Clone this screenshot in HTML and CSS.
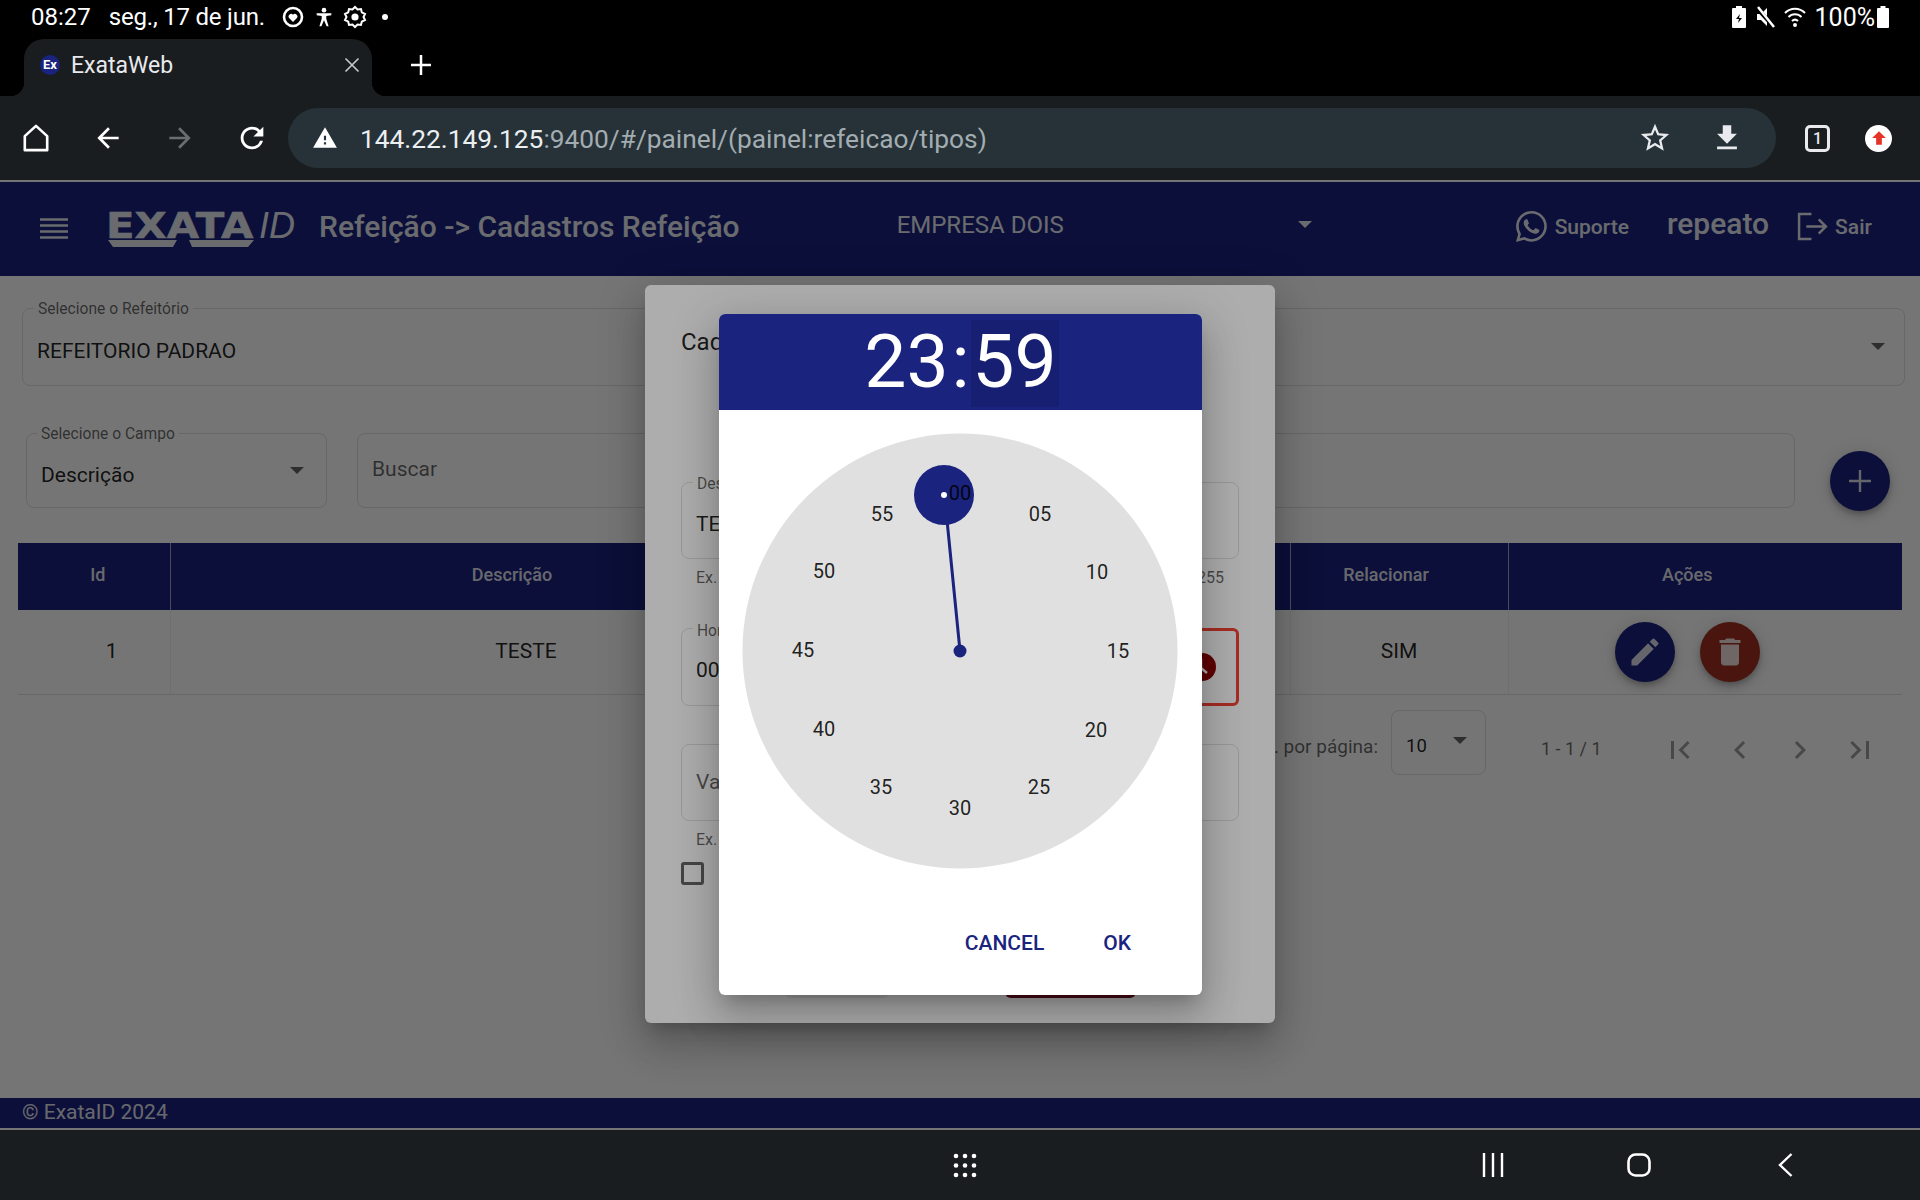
FILE: index.html
```html
<!DOCTYPE html>
<html lang="pt-BR">
<head>
    <meta charset="UTF-8">
    <title>ExataWeb</title>
    <link rel="stylesheet" href="styles.css">
</head>
<body>
    <div class="status-bar">
        <span class="status-time">08:27</span>
        <span class="status-date">seg., 17 de jun.</span>
        <svg class="status-icon" viewBox="0 0 24 24" width="24" height="24"><circle cx="12" cy="12" r="9" fill="none" stroke="#fff" stroke-width="2.6"/><path d="M12 17l-4.2-4.2a2.6 2.6 0 0 1 4.2-3 2.6 2.6 0 0 1 4.2 3z" fill="#fff"/></svg>
        <svg class="status-icon" viewBox="0 0 24 24" width="22" height="24"><circle cx="12" cy="4.5" r="2.5" fill="#fff"/><path d="M4 8h16v2l-5.5 1v3l2.5 8h-2.2L12 15.5 9.2 22H7l2.5-8v-3L4 10z" fill="#fff"/></svg>
        <svg class="status-icon" viewBox="0 0 24 24" width="24" height="24"><path d="M12 2l2.5 2.5 3.5-.5.8 3.4 3.2 1.6-1.5 3 1.5 3-3.2 1.6-.8 3.4-3.5-.5L12 22l-2.5-2.5-3.5.5-.8-3.4L2 15l1.5-3L2 9l3.2-1.6L6 4l3.5.5z" fill="none" stroke="#fff" stroke-width="2"/><circle cx="12" cy="12" r="3.6" fill="#fff"/></svg>
        <span class="status-dot"></span>
        <span class="status-right">
            <svg viewBox="0 0 14 22" width="14" height="22"><path d="M4 0h6v2h3a1 1 0 0 1 1 1v18a1 1 0 0 1-1 1H1a1 1 0 0 1-1-1V3a1 1 0 0 1 1-1h3z" fill="#fff"/><path d="M8 8L4 13h3l-1 4 4-5H7z" fill="#000"/></svg>
            <svg viewBox="0 0 20 22" width="20" height="22"><path d="M2 8h4l6-6v18l-6-6H2z" fill="#fff"/><path d="M1 1l18 20" stroke="#000" stroke-width="4"/><path d="M3 1l16 20" stroke="#fff" stroke-width="2.5"/></svg>
            <svg viewBox="0 0 22 22" width="22" height="22" fill="none" stroke="#fff" stroke-width="2"><path d="M1 7a14 14 0 0 1 20 0"/><path d="M4.5 11a9 9 0 0 1 13 0"/><path d="M8 15a4.5 4.5 0 0 1 6 0"/><circle cx="11" cy="19" r="1" fill="#fff"/></svg>
            <span class="status-pct">100%</span>
            <svg viewBox="0 0 12 22" width="12" height="22"><path d="M3.5 0h5v2H11a1 1 0 0 1 1 1v18a1 1 0 0 1-1 1H1a1 1 0 0 1-1-1V3a1 1 0 0 1 1-1h2.5z" fill="#fff"/></svg>
        </span>
    </div>

    <div class="tab-strip">
        <div class="tab">
            <span class="favicon">Ex</span>
            <span class="tab-title">ExataWeb</span>
            <svg class="tab-close" viewBox="0 0 16 16" width="16" height="16"><path d="M1.5 1.5l13 13M14.5 1.5l-13 13" stroke="#c4c7c9" stroke-width="1.7"/></svg>
        </div>
        <svg class="new-tab" viewBox="0 0 22 22" width="22" height="22"><path d="M11 1v20M1 11h20" stroke="#fff" stroke-width="2.5"/></svg>
    </div>

    <div class="toolbar">
        <svg class="tool-btn" viewBox="0 0 28 30" width="26" height="28"><path d="M14 2L2 13v15h24V13z" fill="none" stroke="#fff" stroke-width="2.8" stroke-linejoin="round"/></svg>
        <svg class="tool-btn" viewBox="0 0 24 24" width="32" height="32"><path d="M20 11H7.83l5.59-5.59L12 4l-8 8 8 8 1.41-1.41L7.83 13H20v-2z" fill="#fff"/></svg>
        <svg class="tool-btn" viewBox="0 0 24 24" width="32" height="32"><path d="M12 4l-1.41 1.41L16.17 11H4v2h12.17l-5.58 5.59L12 20l8-8z" fill="#6b6e70"/></svg>
        <svg class="tool-btn" viewBox="0 0 24 24" width="34" height="34"><path d="M17.65 6.35A7.958 7.958 0 0 0 12 4c-4.42 0-7.99 3.58-7.99 8s3.57 8 7.99 8c3.73 0 6.84-2.55 7.73-6h-2.08A5.99 5.99 0 0 1 12 18c-3.31 0-6-2.69-6-6s2.69-6 6-6c1.66 0 3.14.69 4.22 1.78L13 11h7V4l-2.35 2.35z" fill="#fff"/></svg>
        <div class="omnibox">
            <svg class="omni-warning" viewBox="0 0 24 24" width="26" height="26"><path d="M1 21h22L12 2 1 21zm12-3h-2v-2h2v2zm0-4h-2v-4h2v4z" fill="#fff"/></svg>
            <span class="omni-url"><span class="omni-host">144.22.149.125</span>:9400/#/painel/(painel:refeicao/tipos)</span>
            <svg class="omni-star" viewBox="0 0 24 24" width="34" height="34"><path d="M22 9.24l-7.19-.62L12 2 9.19 8.63 2 9.24l5.46 4.73L5.82 21 12 17.27 18.18 21l-1.63-7.03L22 9.24zM12 15.4l-3.76 2.27 1-4.28-3.32-2.88 4.38-.38L12 6.1l1.71 4.04 4.38.38-3.32 2.88 1 4.28L12 15.4z" fill="#e8eaed"/></svg>
            <svg class="omni-download" viewBox="0 0 24 24" width="34" height="34"><path d="M19 9h-4V3H9v6H5l7 7 7-7zM5 18v2h14v-2H5z" fill="#e8eaed"/></svg>
        </div>
        <span class="tab-count">1</span>
        <span class="profile"><svg viewBox="0 0 14 14" width="16" height="16"><path d="M7 1L1 7h3.5v6h5V7H13z" fill="#e53327"/></svg></span>
    </div>

    <div class="app">
        <header class="app-header">
            <svg class="menu-icon" viewBox="0 0 28 21" width="28" height="21"><path d="M0 1.5h28M0 7.5h28M0 13.5h28M0 19.5h28" stroke="#fff" stroke-width="2.6"/></svg>
            <div class="logo">
                <div class="logo-text"><span class="logo-exata">EXATA</span><span class="logo-id">ID</span></div>
                <svg class="logo-swoosh" viewBox="0 0 148 7" width="148" height="7"><path d="M1 0h69l-4 7H6zM82 0h65l-6 7H85z" fill="#fff"/></svg>
            </div>
            <h1 class="page-title">Refeição -&gt; Cadastros Refeição</h1>
            <div class="company">
                <span>EMPRESA DOIS</span>
                <span class="caret"></span>
            </div>
            <a class="header-link support">
                <svg viewBox="0 0 16 16" width="31" height="31"><path d="M13.601 2.326A7.854 7.854 0 0 0 7.994 0C3.627 0 .068 3.558.064 7.926c0 1.399.366 2.76 1.057 3.965L0 16l4.204-1.102a7.933 7.933 0 0 0 3.79.965h.004c4.368 0 7.926-3.558 7.93-7.93A7.898 7.898 0 0 0 13.6 2.326zM7.994 14.521a6.573 6.573 0 0 1-3.356-.92l-.24-.144-2.494.654.666-2.433-.156-.251a6.56 6.56 0 0 1-1.007-3.505c0-3.626 2.957-6.584 6.591-6.584a6.56 6.56 0 0 1 4.66 1.931 6.557 6.557 0 0 1 1.928 4.66c-.004 3.639-2.961 6.592-6.592 6.592zm3.615-4.934c-.197-.099-1.17-.578-1.353-.646-.182-.065-.315-.099-.445.099-.133.197-.513.646-.627.775-.114.133-.232.148-.43.05-.197-.1-.836-.308-1.592-.985-.59-.525-.985-1.175-1.103-1.372-.114-.198-.011-.304.088-.403.087-.088.197-.232.296-.346.1-.114.133-.198.198-.33.065-.134.034-.248-.015-.347-.05-.099-.445-1.076-.612-1.47-.16-.389-.323-.335-.445-.34-.114-.007-.247-.007-.38-.007a.729.729 0 0 0-.529.247c-.182.198-.691.677-.691 1.654 0 .977.71 1.916.81 2.049.098.133 1.394 2.132 3.383 2.992.47.205.84.326 1.129.418.475.152.904.129 1.246.08.38-.058 1.171-.48 1.338-.943.164-.464.164-.86.114-.943-.049-.084-.182-.133-.38-.232z" fill="#fff"/></svg>
                <span>Suporte</span>
            </a>
            <span class="user-name">repeato</span>
            <a class="header-link logout">
                <svg viewBox="0 0 30 30" width="31" height="31" fill="none" stroke="#fff" stroke-width="2.4"><path d="M14 3H2v24h12"/><path d="M9 15h19M21 8l7 7-7 7"/></svg>
                <span>Sair</span>
            </a>
        </header>

        <main class="content">
            <div class="field field-canteen">
                <label class="field-label">Selecione o Refeitório</label>
                <span class="field-value">REFEITORIO PADRAO</span>
                <span class="caret caret-dark"></span>
            </div>

            <div class="search-row">
                <div class="field field-column">
                    <label class="field-label">Selecione o Campo</label>
                    <span class="field-value">Descrição</span>
                    <span class="caret caret-dark"></span>
                </div>
                <div class="field field-search">
                    <span class="field-value field-placeholder">Buscar</span>
                </div>
                <button class="fab fab-add">
                    <svg viewBox="0 0 24 24" width="24" height="24"><path d="M12 1v22M1 12h22" stroke="#fff" stroke-width="2.4"/></svg>
                </button>
            </div>

            <table class="data-table">
                <colgroup>
                    <col class="col-id"><col class="col-desc"><col class="col-hidden"><col class="col-rel"><col class="col-actions">
                </colgroup>
                <thead>
                    <tr>
                        <th class="th-id">Id</th>
                        <th class="th-desc">Descrição</th>
                        <th></th>
                        <th class="th-rel">Relacionar</th>
                        <th class="th-actions">Ações</th>
                    </tr>
                </thead>
                <tbody>
                    <tr>
                        <td class="td-id">1</td>
                        <td>TESTE</td>
                        <td></td>
                        <td>SIM</td>
                        <td class="td-actions">
                            <button class="fab">
                                <svg viewBox="0 0 24 24" width="36" height="36"><path d="M3 17.25V21h3.75L17.81 9.94l-3.75-3.75L3 17.25zM20.71 7.04a.996.996 0 0 0 0-1.41l-2.34-2.34a.996.996 0 0 0-1.41 0l-1.83 1.83 3.75 3.75 1.83-1.83z" fill="#fff"/></svg>
                            </button>
                            <button class="fab fab-danger">
                                <svg viewBox="0 0 24 24" width="36" height="36"><path d="M6 19c0 1.1.9 2 2 2h8c1.1 0 2-.9 2-2V7H6v12zM19 4h-3.5l-1-1h-5l-1 1H5v2h14V4z" fill="#fff"/></svg>
                            </button>
                        </td>
                    </tr>
                </tbody>
            </table>

            <div class="paginator">
                <span class="page-size-label">Qtd. por página:</span>
                <div class="field page-size">
                    <span class="field-value">10</span>
                    <span class="caret caret-dark"></span>
                </div>
                <span class="page-range">1 - 1 / 1</span>
                <svg class="page-btn" viewBox="0 0 24 24" width="36" height="36"><path d="M18.41 16.59L13.82 12l4.59-4.59L17 6l-6 6 6 6zM6 6h2v12H6z"/></svg>
                <svg class="page-btn" viewBox="0 0 24 24" width="36" height="36"><path d="M15.41 7.41L14 6l-6 6 6 6 1.41-1.41L10.83 12z"/></svg>
                <svg class="page-btn" viewBox="0 0 24 24" width="36" height="36"><path d="M10 6L8.59 7.41 13.17 12l-4.58 4.59L10 18l6-6z"/></svg>
                <svg class="page-btn" viewBox="0 0 24 24" width="36" height="36"><path d="M5.59 7.41L10.18 12l-4.59 4.59L7 18l6-6-6-6zM16 6h2v12h-2z"/></svg>
            </div>
        </main>

        <footer class="app-footer">© ExataID 2024</footer>

        <div class="backdrop"></div>

        <section class="dialog">
            <h2 class="dialog-title">Cadastro</h2>
            <div class="field dialog-field first-field">
                <label class="field-label">Descrição</label>
                <span class="field-value">TESTE</span>
            </div>
            <div class="hint-row"><span>Ex.</span><span>5 / 255</span></div>
            <div class="hour-row">
                <div class="field dialog-field hour-field">
                    <label class="field-label">Hora</label>
                    <span class="field-value">00:00</span>
                </div>
                <div class="clock-box">
                    <svg viewBox="0 0 28 28" width="28" height="28"><circle cx="14" cy="14" r="14" fill="#8d0000"/><path d="M13 6v9l6 5" fill="none" stroke="#fff" stroke-width="2.5"/></svg>
                </div>
            </div>
            <div class="field dialog-field value-field">
                <span class="field-value field-placeholder">Valor</span>
            </div>
            <div class="hint-row"><span>Ex.</span></div>
            <div class="check-row"><span class="checkbox"></span></div>
            <div class="dialog-actions">
                <button class="btn-plain"></button>
                <button class="btn-danger"></button>
            </div>
        </section>

        <div class="backdrop"></div>

        <section class="time-picker">
            <div class="picker-head">
                <span class="picker-unit">23</span><span class="picker-colon">:</span><span class="picker-unit picker-active">59</span>
            </div>
            <svg class="dial" viewBox="0 0 483 480" width="483" height="480">
                <circle cx="241" cy="241" r="217.5" fill="#e0e0e0"/>
                <line x1="241" y1="241" x2="227" y2="100" stroke="#1a237e" stroke-width="3"/>
                <circle cx="241" cy="241" r="6.5" fill="#1a237e"/>
                <circle cx="225" cy="85" r="30" fill="#1a237e"/>
                <circle cx="225" cy="85" r="3" fill="#fff"/>
                <g class="dial-nums">
                    <text x="241" y="90">00</text>
                    <text x="321" y="111">05</text>
                    <text x="378" y="169">10</text>
                    <text x="399" y="248">15</text>
                    <text x="377" y="327">20</text>
                    <text x="320" y="384">25</text>
                    <text x="241" y="405">30</text>
                    <text x="162" y="384">35</text>
                    <text x="105" y="326">40</text>
                    <text x="84" y="247">45</text>
                    <text x="105" y="168">50</text>
                    <text x="163" y="111">55</text>
                </g>
            </svg>
            <div class="picker-actions">
                <button class="picker-btn">CANCEL</button>
                <button class="picker-btn">OK</button>
            </div>
        </section>
    </div>

    <div class="nav-bar">
        <svg class="nav-apps" viewBox="0 0 24 25" width="24" height="25" fill="#fff"><circle cx="3" cy="3" r="2.3"/><circle cx="12" cy="3" r="2.3"/><circle cx="21" cy="3" r="2.3"/><circle cx="3" cy="12.5" r="2.3"/><circle cx="12" cy="12.5" r="2.3"/><circle cx="21" cy="12.5" r="2.3"/><circle cx="3" cy="22" r="2.3"/><circle cx="12" cy="22" r="2.3"/><circle cx="21" cy="22" r="2.3"/></svg>
        <svg class="nav-recent" viewBox="0 0 22 24" width="22" height="24"><path d="M2 0v24M11 0v24M20 0v24" stroke="#fff" stroke-width="2.4"/></svg>
        <svg class="nav-home" viewBox="0 0 24 24" width="24" height="24"><rect x="1.5" y="1.5" width="21" height="21" rx="7" fill="none" stroke="#fff" stroke-width="2.6"/></svg>
        <svg class="nav-back" viewBox="0 0 15 24" width="15" height="24"><path d="M13.5 1L2 12l11.5 11" fill="none" stroke="#fff" stroke-width="2.4"/></svg>
    </div>
</body>
</html>
```

FILE: styles.css
```css
* {
    margin: 0;
    padding: 0;
    box-sizing: border-box;
}

html, body {
    height: 1200px;
    overflow: hidden;
}

body {
    font-family: Roboto, "Liberation Sans", sans-serif;
    background: #000;
    color: #fff;
    display: flex;
    flex-direction: column;
}

button {
    font-family: inherit;
    border: none;
    background: none;
}

/* device status bar */
.status-bar {
    height: 39px;
    padding: 0 31px 5px;
    display: flex;
    align-items: center;
    font-size: 24px;
}

.status-date {
    margin-left: 18px;
    margin-right: 16px;
    letter-spacing: -0.2px;
}

.status-icon {
    margin-right: 8px;
    flex: none;
}

.status-dot {
    width: 6px;
    height: 6px;
    margin-left: 7px;
    background: #fff;
    border-radius: 50%;
}

.status-right {
    margin-left: auto;
    display: flex;
    align-items: center;
    gap: 9px;
}

.status-pct {
    font-size: 25px;
    margin-right: -7px;
}

/* browser tabs */
.tab-strip {
    height: 57px;
    flex: none;
    display: flex;
    align-items: center;
}

.tab {
    width: 348px;
    height: 57px;
    margin-left: 24px;
    padding: 0 12px 5px 16px;
    background: #1a1d1f;
    border-radius: 20px 20px 0 0;
    display: flex;
    align-items: center;
    position: relative;
}

.tab::before,
.tab::after {
    content: "";
    position: absolute;
    bottom: 0;
    width: 14px;
    height: 14px;
}

.tab::before {
    left: -14px;
    background: radial-gradient(circle at 0 0, transparent 14px, #1a1d1f 14.5px);
}

.tab::after {
    right: -14px;
    background: radial-gradient(circle at 100% 0, transparent 14px, #1a1d1f 14.5px);
}

.favicon {
    width: 20px;
    height: 20px;
    background: #1a237e;
    border-radius: 50%;
    font-size: 13px;
    font-weight: 700;
    line-height: 20px;
    text-align: center;
}

.tab-title {
    margin-left: 11px;
    font-size: 23px;
    color: #e8eaed;
}

.tab-close {
    margin-left: auto;
}

.new-tab {
    margin-left: 38px;
    margin-bottom: 5px;
}

/* browser toolbar */
.toolbar {
    height: 84px;
    flex: none;
    background: #1a1d1f;
    display: flex;
    align-items: center;
}

.tool-btn {
    flex: none;
    width: 72px;
}

.omnibox {
    width: 1488px;
    height: 60px;
    flex: none;
    padding: 0 32px 0 24px;
    background: #263238;
    border-radius: 30px;
    display: flex;
    align-items: center;
}

.omni-url {
    margin-left: 22px;
    margin-top: 2px;
    font-size: 26.3px;
    color: #a3adb1;
    white-space: nowrap;
}

.omni-host {
    color: #eceff1;
}

.omni-star {
    margin-left: auto;
}

.omni-download {
    margin-left: 38px;
}

.tab-count {
    width: 25px;
    height: 27px;
    flex: none;
    margin-left: 29px;
    border: 3px solid #e8eaed;
    border-radius: 5px;
    font-size: 16px;
    font-weight: 500;
    line-height: 21px;
    text-align: center;
    color: #e8eaed;
}

.profile {
    width: 27px;
    height: 27px;
    flex: none;
    margin-left: 35px;
    background: #fff;
    border-radius: 50%;
    display: flex;
    align-items: center;
    justify-content: center;
}

/* the web app */
.app {
    height: 950px;
    flex: none;
    background: #fff;
    display: flex;
    flex-direction: column;
    position: relative;
    overflow: hidden;
}

.app-header {
    height: 96px;
    flex: none;
    padding-bottom: 5px;
    background: #1a237e;
    border-top: 2px solid #fff;
    display: flex;
    align-items: center;
}

.app-header > * {
    opacity: 0.9;
}

.menu-icon {
    flex: none;
    margin-left: 40px;
    margin-top: 3px;
}

.logo {
    width: 190px;
    flex: none;
    margin-left: 39px;
    margin-top: 6px;
    display: flex;
    flex-direction: column;
}

.logo-text {
    display: flex;
    align-items: baseline;
    height: 28px;
    line-height: 28px;
}

.logo-exata {
    width: 151px;
    flex: none;
    margin-left: -1px;
    font-family: "DejaVu Sans", sans-serif;
    font-size: 36px;
    font-weight: 700;
    -webkit-text-stroke: 0.5px #fff;
    transform: scaleX(1.16);
    transform-origin: left;
}

.logo-id {
    font-family: "Liberation Sans", sans-serif;
    font-size: 36px;
    font-style: italic;
    margin-left: 2px;
}

.page-title {
    margin-left: 22px;
    font-size: 30px;
    font-weight: 500;
    white-space: nowrap;
}

.company {
    width: 415px;
    flex: none;
    margin-left: 157px;
    margin-top: -4px;
    font-size: 24px;
    display: flex;
    align-items: center;
    justify-content: space-between;
}

.caret {
    width: 0;
    height: 0;
    flex: none;
    border-left: 7px solid transparent;
    border-right: 7px solid transparent;
    border-top: 7px solid #fff;
}

.caret-dark {
    border-top-color: rgba(0, 0, 0, 0.6);
}

.header-link {
    display: flex;
    align-items: center;
    font-size: 21px;
    font-weight: 500;
}

.support {
    margin-left: 204px;
    gap: 8px;
}

.user-name {
    margin-left: 38px;
    margin-top: -6px;
    font-size: 30px;
    font-weight: 500;
}

.logout {
    margin-left: 28px;
    gap: 7px;
}

.content {
    flex: 1;
    padding: 32px 18px 0;
    color: rgba(0, 0, 0, 0.87);
}

/* outlined form fields */
.field {
    height: 77px;
    border: 1px solid rgba(0, 0, 0, 0.12);
    border-radius: 8px;
    padding: 0 14px;
    display: flex;
    align-items: center;
    justify-content: space-between;
    position: relative;
    color: rgba(0, 0, 0, 0.87);
}

.field-label {
    position: absolute;
    top: -9px;
    left: 11px;
    padding: 0 4px;
    background: #fff;
    font-size: 15.6px;
    line-height: 18px;
    color: rgba(0, 0, 0, 0.6);
}

.field-value {
    font-size: 21px;
}

.field-placeholder {
    color: rgba(0, 0, 0, 0.6);
}

.field-canteen {
    height: 78px;
    margin: 0 -3px 0 4px;
}

.field-canteen .field-value {
    margin-top: 8px;
}

.field-canteen .caret {
    margin-right: 5px;
    margin-top: -2px;
}

.search-row {
    margin-top: 47px;
    margin-left: 8px;
    display: flex;
    align-items: flex-start;
}

.field-column {
    width: 301px;
    height: 75px;
}

.field-column .field-label {
    left: 10px;
}

.field-column .field-value {
    margin-top: 8px;
}

.field-column .caret {
    margin-right: 8px;
}

.field-search {
    width: 1438px;
    height: 75px;
    margin-left: 30px;
}

.field-search .field-value {
    margin-top: -3px;
}

.fab {
    width: 60px;
    height: 60px;
    background: #1a237e;
    border-radius: 50%;
    display: inline-flex;
    align-items: center;
    justify-content: center;
    box-shadow: 0 3px 5px -1px rgba(0, 0, 0, 0.2), 0 6px 10px 0 rgba(0, 0, 0, 0.14), 0 1px 18px 0 rgba(0, 0, 0, 0.12);
}

.fab svg {
    opacity: 0.85;
}

.fab-add {
    flex: none;
    margin-left: 35px;
    margin-top: 18px;
}

.fab-danger {
    background: #a0301f;
    margin-left: 20px;
}

/* table */
.data-table {
    width: 1884px;
    margin-top: 32px;
    border-collapse: collapse;
    table-layout: fixed;
}

.col-id { width: 152px; }
.col-desc { width: 712px; }
.col-hidden { width: 408px; }
.col-rel { width: 218px; }
.col-actions { width: 394px; }

.data-table th {
    height: 67px;
    padding-bottom: 4px;
    background: #1a237e;
    color: rgba(255, 255, 255, 0.9);
    font-size: 18px;
    font-weight: 500;
    border-left: 1px solid rgba(255, 255, 255, 0.6);
}

.data-table th:first-child {
    border-left: none;
}

.th-id { padding-left: 8px; }
.th-desc { padding-right: 28px; }
.th-rel { padding-right: 26px; }
.th-actions { padding-right: 36px; }

.data-table td {
    height: 84px;
    padding-bottom: 2px;
    text-align: center;
    font-size: 21px;
    border-bottom: 1px solid rgba(0, 0, 0, 0.12);
    border-left: 1px solid rgba(0, 0, 0, 0.06);
}

.data-table td:first-child {
    border-left: none;
}

.data-table .td-id { padding-left: 36px; }
.data-table .td-actions { padding: 0 36px 0 0; }

/* paginator */
.paginator {
    margin-top: 15px;
    padding-right: 12px;
    display: flex;
    align-items: center;
    justify-content: flex-end;
}

.page-size-label {
    margin-top: 8px;
    font-size: 19px;
    color: rgba(0, 0, 0, 0.6);
}

.page-size {
    width: 95px;
    height: 65px;
    margin-left: 13px;
}

.page-size .field-value {
    margin-top: 8px;
    font-size: 18.5px;
}

.page-size .caret {
    margin-top: -4px;
    margin-right: 4px;
}

.page-range {
    width: 59px;
    margin-top: 13px;
    margin-left: 55px;
    margin-right: 50px;
    font-size: 18px;
    white-space: nowrap;
    color: rgba(0, 0, 0, 0.6);
}

.page-btn {
    width: 60px;
    margin-top: 16px;
    fill: rgba(0, 0, 0, 0.38);
}

.app-footer {
    height: 32px;
    flex: none;
    padding-left: 22px;
    background: #1a237e;
    border-bottom: 2px solid #fff;
    color: rgba(255, 255, 255, 0.9);
    font-size: 21px;
    line-height: 28px;
}

/* modal layers */
.backdrop {
    position: absolute;
    inset: 0;
    background: rgba(0, 0, 0, 0.32);
}

.dialog {
    position: absolute;
    left: 645px;
    top: 105px;
    width: 630px;
    height: 738px;
    padding: 36px;
    background: #fff;
    border-radius: 6px;
    color: rgba(0, 0, 0, 0.87);
    box-shadow: 0 11px 15px -7px rgba(0, 0, 0, 0.2), 0 24px 38px 3px rgba(0, 0, 0, 0.14), 0 9px 46px 8px rgba(0, 0, 0, 0.12);
}

.dialog-title {
    height: 44px;
    margin-top: -1px;
    margin-bottom: 1px;
    font-size: 24px;
    font-weight: 400;
    line-height: 44px;
}

.dialog-field {
    width: 558px;
}

.dialog-field .field-label {
    top: -8px;
}

.first-field {
    margin-top: 118px;
}

.first-field .field-value {
    margin-top: 7px;
}

.hint-row {
    height: 36px;
    padding: 0 15px;
    display: flex;
    align-items: center;
    justify-content: space-between;
    font-size: 16px;
    color: rgba(0, 0, 0, 0.6);
}

.hour-row {
    margin-top: 33px;
    display: flex;
    gap: 12px;
}

.hour-field {
    width: auto;
    flex: 1;
    height: 78px;
}

.hour-field .field-label {
    top: -7px;
}

.hour-field .field-value {
    margin-top: 6px;
}

.clock-box {
    width: 74px;
    height: 78px;
    flex: none;
    border: 3px solid #f44336;
    border-radius: 6px;
    display: flex;
    align-items: center;
    justify-content: center;
}

.value-field {
    margin-top: 38px;
}

.value-field .field-value {
    margin-top: -2px;
}

.check-row {
    margin-top: 5px;
    height: 23px;
}

.checkbox {
    display: block;
    width: 23px;
    height: 23px;
    border: 3px solid rgba(0, 0, 0, 0.6);
    border-radius: 3px;
}

.dialog-actions {
    margin-top: 54px;
    display: flex;
    justify-content: center;
    gap: 116px;
}

.btn-plain,
.btn-danger {
    height: 59px;
    border-radius: 6px;
}

.btn-plain {
    width: 104px;
    background: #eee;
}

.btn-danger {
    width: 131px;
    background: #6e1020;
}

/* time picker */
.time-picker {
    position: absolute;
    left: 719px;
    top: 134px;
    width: 483px;
    height: 681px;
    background: #fff;
    border-radius: 6px;
    overflow: hidden;
    display: flex;
    flex-direction: column;
    box-shadow: 0 11px 15px -7px rgba(0, 0, 0, 0.2), 0 24px 38px 3px rgba(0, 0, 0, 0.14), 0 9px 46px 8px rgba(0, 0, 0, 0.12);
}

.picker-head {
    height: 96px;
    flex: none;
    padding-top: 3px;
    background: #1a237e;
    display: flex;
    align-items: center;
    justify-content: center;
    font-size: 75px;
}

.picker-unit,
.picker-colon {
    height: 87px;
    line-height: 83px;
    text-align: center;
}

.picker-unit {
    width: 88px;
}

.picker-active {
    background: rgba(0, 0, 0, 0.09);
}

.picker-colon {
    width: 20px;
}

.dial {
    flex: none;
    display: block;
}

.dial-nums {
    font-size: 20px;
    fill: rgba(0, 0, 0, 0.87);
    text-anchor: middle;
}

.picker-actions {
    flex: 1;
    padding-right: 71px;
    display: flex;
    align-items: center;
    justify-content: flex-end;
    gap: 59px;
}

.picker-btn {
    font-size: 21px;
    font-weight: 500;
    color: #1a237e;
}

/* device navigation bar */
.nav-bar {
    height: 70px;
    flex: none;
    background: #1a1d1f;
    display: flex;
    align-items: center;
}

.nav-apps { margin-left: 953px; }
.nav-recent { margin-left: 505px; }
.nav-home { margin-left: 123px; }
.nav-back { margin-left: 127px; }
```
